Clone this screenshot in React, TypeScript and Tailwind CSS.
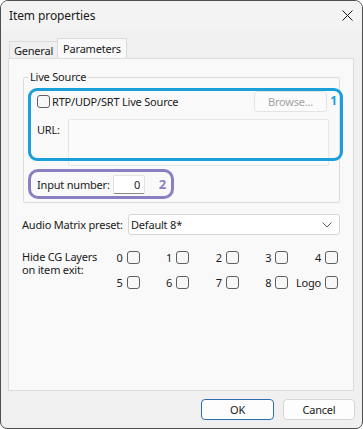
import React from "react";

const font = { fontFamily: '"Noto Sans", sans-serif' };

function Check() {
  return <span className="block w-[13px] h-[13px] rounded-[3px] border border-[#5f5f5f] bg-[#f7f7f7] shrink-0" />;
}

function Layer({ label }: { label: string }) {
  return (
    <div className="flex items-center gap-[4px] h-[13px]">
      <span className="leading-[13px]">{label}</span>
      <Check />
    </div>
  );
}

export default function App() {
  return (
    <div
      style={font}
      className="w-[363px] h-[429px] flex flex-col border border-[#4f4f4f] rounded-t-[8px] rounded-b-[7px] overflow-hidden bg-[#f0f0f0] text-[11px] tracking-[-0.2px] whitespace-nowrap text-[#1a1a1a]"
    >
      {/* title bar */}
      <div className="h-[30px] shrink-0 flex items-center justify-between pl-[8px] pr-[9px] bg-[#f3f3f3]">
        <span className="text-[12px] tracking-[-0.1px] leading-[14px] -mt-[1px]">Item properties</span>
        <svg width="11" height="11" viewBox="0 0 11 11" className="-mt-[2px]">
          <path d="M0.5 0.5 L10.5 10.5 M10.5 0.5 L0.5 10.5" stroke="#1a1a1a" strokeWidth="1" />
        </svg>
      </div>

      {/* body */}
      <div className="flex-1 flex flex-col pl-[7px] pr-[8px] pt-[7px]">
        {/* tabs */}
        <div className="h-[20px] flex items-end pl-[1px]">
          <div className="h-[17px] w-[48px] border-t border-l border-[#dadada] bg-[#f0f0f0] flex items-center justify-center leading-[14px] pt-[2px]">
            General
          </div>
          <div className="h-[20px] w-[70px] border-t border-l border-r border-[#dadada] bg-[#f9f9f9] flex items-center justify-center leading-[14px]">
            Parameters
          </div>
        </div>

        {/* tab page */}
        <div className="relative h-[333px] border border-[#dcdcdc] bg-[#f9f9f9] flex flex-col px-[13px]">
          <fieldset className="mt-[11px] ml-[1px] border border-[#dcdcdc] rounded-[2px] pl-[13px] pr-[12px] pb-[8px]">
            <legend className="-ml-[9px] px-[2px] leading-[14px]">Live Source</legend>
            <div className="mt-[7px] h-[21px] flex items-center justify-between">
              <div className="flex items-center gap-[2px]">
                <Check />
                <span className="leading-[14px]">RTP/UDP/SRT Live Source</span>
              </div>
              <div className="w-[73px] h-[21px] rounded-[4px] border border-[#e3e3e3] bg-[#fbfbfb] text-[#a3a3a3] flex items-center justify-center leading-[14px]">
                Browse...
              </div>
            </div>
            <div className="mt-[7px] h-[47px] flex -mr-[2px]">
              <span className="w-[31px] pt-[4px] leading-[14px]">URL:</span>
              <div className="flex-1 border border-[#e6e6e6] rounded-[2px] bg-[#fbfbfb]" />
            </div>
            <div className="mt-[9px] h-[19px] flex items-center">
              <span className="w-[76px] leading-[14px]">Input number:</span>
              <div className="w-[32px] h-[19px] bg-white border border-[#e3e3e3] border-b-[#8a8a8a] rounded-[2px] flex items-center justify-end pr-[4px] leading-[14px]">
                0
              </div>
            </div>
          </fieldset>

          <div className="mt-[11px] h-[21px] flex items-center">
            <span className="w-[106px] leading-[14px]">Audio Matrix preset:</span>
            <div className="flex-1 h-[21px] bg-white border border-[#d6d6d6] rounded-[3px] flex items-center justify-between pl-[2px] pr-[7px] leading-[14px]">
              <span>Default 8*</span>
              <svg width="10" height="6" viewBox="0 0 10 6">
                <path d="M0.5 0.5 L5 5 L9.5 0.5" stroke="#5a5a5a" strokeWidth="1" fill="none" />
              </svg>
            </div>
          </div>

          <div className="mt-[16px] flex items-start">
            <div className="w-[68px] leading-[13px] -mt-[1px]">
              <div>Hide CG Layers</div>
              <div>on item exit:</div>
            </div>
            <div className="w-[248px] grid grid-cols-5 justify-items-end gap-y-[12px]">
              <Layer label="0" />
              <Layer label="1" />
              <Layer label="2" />
              <Layer label="3" />
              <Layer label="4" />
              <Layer label="5" />
              <Layer label="6" />
              <Layer label="7" />
              <Layer label="8" />
              <Layer label="Logo" />
            </div>
          </div>

          {/* annotation overlays */}
          <div className="absolute left-[19px] top-[29px] w-[315px] h-[73px] rounded-[9px] border-[3px] border-[#1a9fdb]">
            <span className="absolute right-[3px] top-[3px] text-[12px] leading-[14px] font-bold text-[#1a9fdb]">1</span>
          </div>
          <div className="absolute left-[19px] top-[110px] w-[146px] h-[30px] rounded-[10px] border-[3px] border-[#8b7fc4] flex items-center justify-end pr-[5px]">
            <span className="leading-[14px] font-bold text-[13px] text-[#8b7fc4]">2</span>
          </div>
        </div>

        {/* buttons */}
        <div className="mt-[8px] mb-[8px] h-[21px] flex justify-end gap-[9px] -mr-[1px]">
          <div className="w-[73px] h-[21px] rounded-[4px] border border-[#2f6db0] bg-[#fdfdfd] flex items-center justify-center leading-[14px]">
            OK
          </div>
          <div className="w-[72px] h-[21px] rounded-[4px] border border-[#d5d5d5] bg-[#fdfdfd] flex items-center justify-center leading-[14px]">
            Cancel
          </div>
        </div>
      </div>
    </div>
  );
}
